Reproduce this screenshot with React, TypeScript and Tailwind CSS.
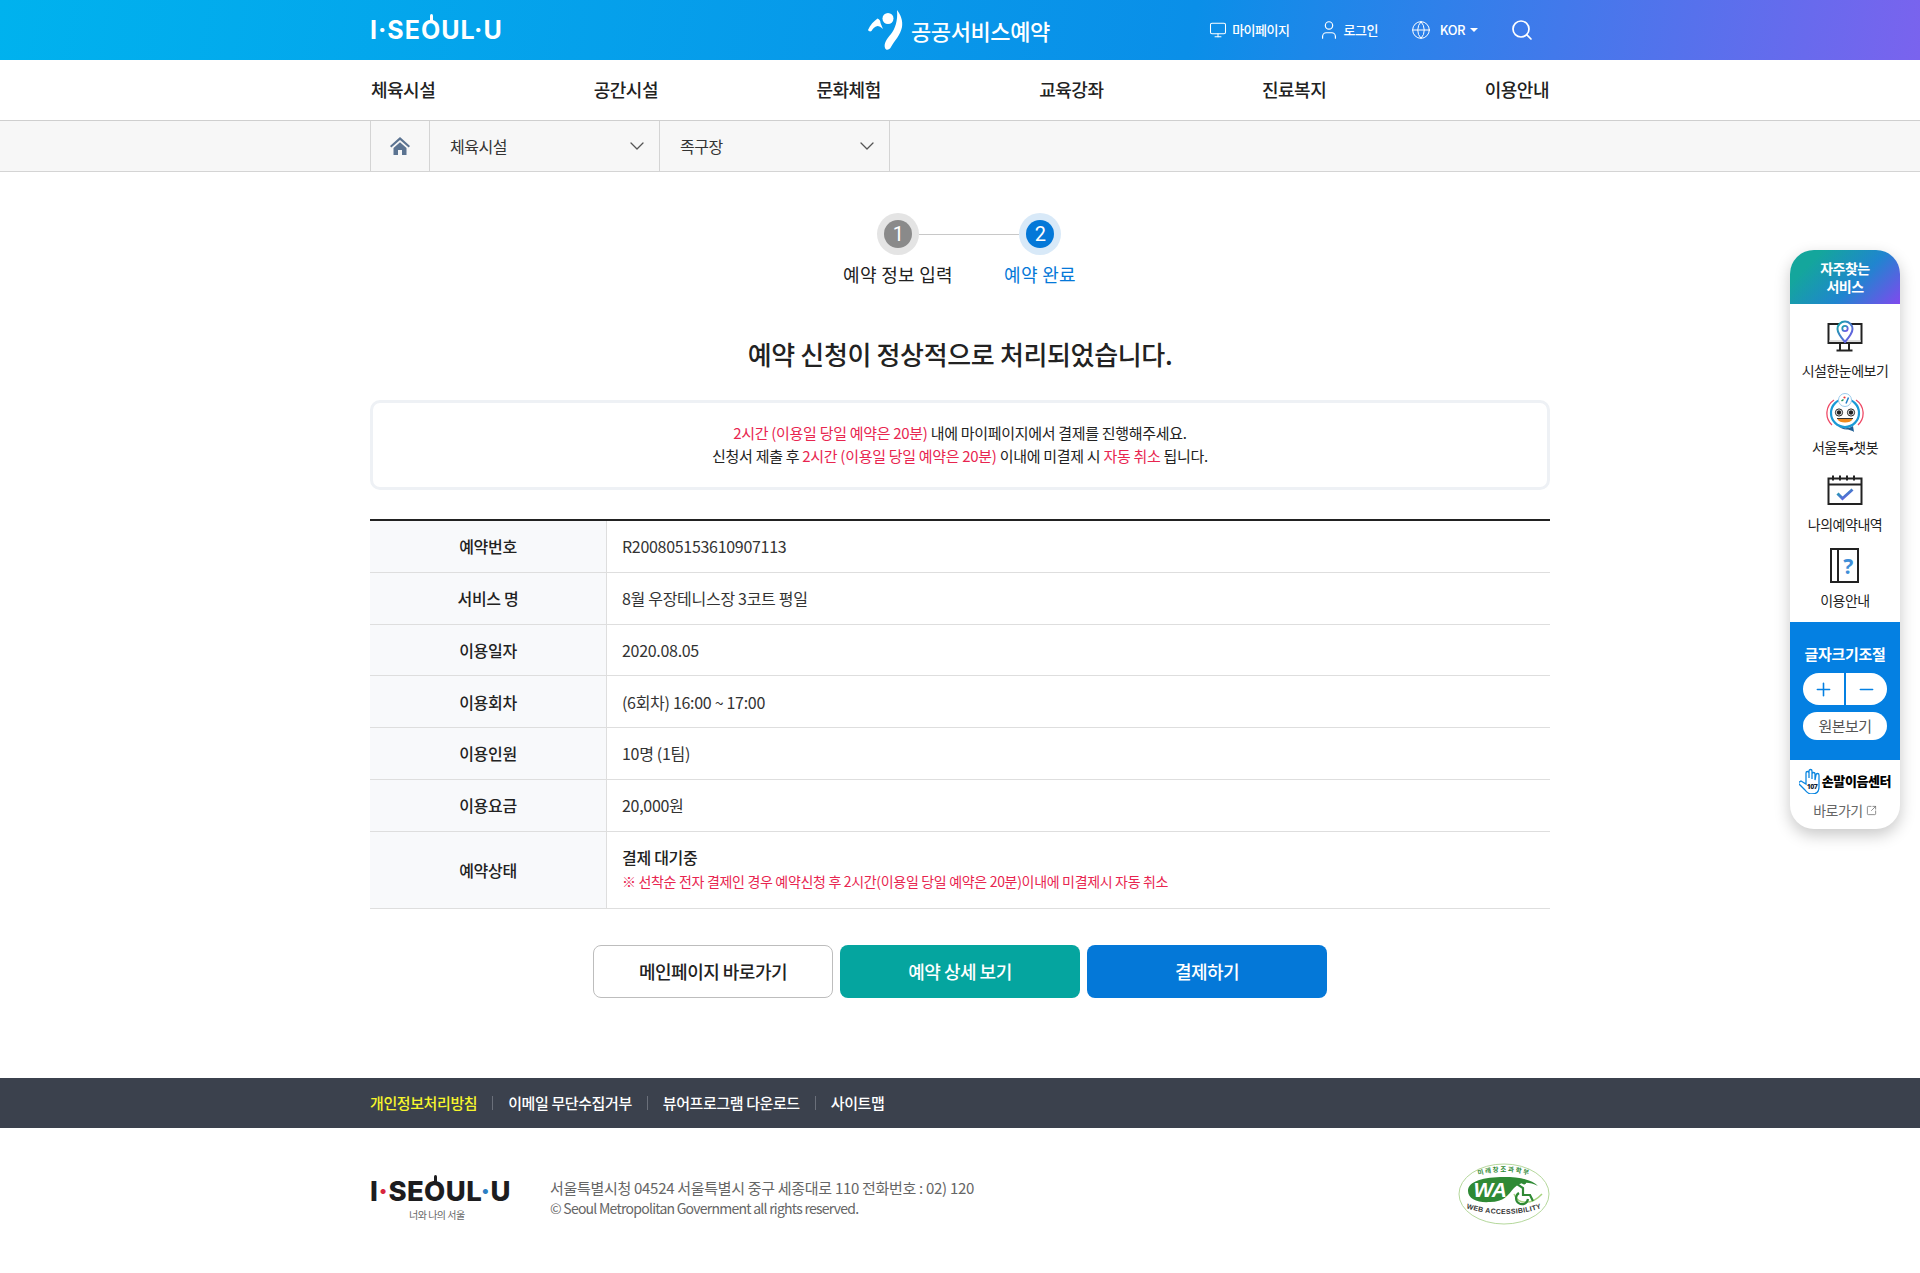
import { ChevronDown, Globe, Minus, Monitor, Plus, Search, SquareArrowOutUpRight, User } from "lucide-react";

const menus = ["체육시설", "공간시설", "문화체험", "교육강좌", "진료복지", "이용안내"];

const rows = [
  { label: "예약번호", value: "R200805153610907113" },
  { label: "서비스 명", value: "8월 우장테니스장 3코트 평일" },
  { label: "이용일자", value: "2020.08.05" },
  { label: "이용회차", value: "(6회차) 16:00 ~ 17:00" },
  { label: "이용인원", value: "10명 (1팀)" },
  { label: "이용요금", value: "20,000원" },
];

const footerLinks = ["이메일 무단수집거부", "뷰어프로그램 다운로드", "사이트맵"];

function GradientDef({ id }: { id: string }) {
  return (
    <defs>
      <linearGradient id={id} x1="0" y1="0" x2="1" y2="1">
        <stop offset="0" stopColor="#12a8a8" />
        <stop offset="1" stopColor="#7a50ee" />
      </linearGradient>
    </defs>
  );
}

function MonitorPinIcon() {
  return (
    <svg width="36" height="33" viewBox="0 0 36 33" fill="none">
      <GradientDef id="pinGrad" />
      <path d="M1.5 4h33v19h-33z" stroke="#222" strokeWidth="2" />
      <path d="M2.5 20h31v2h-31z" fill="#ddd" />
      <path d="M13 23v7M22 23v7M9.5 30.500h16" stroke="#222" strokeWidth="2" />
      <path d="M18 22c-4-4.600-7.500-8.800-7.500-13a7.500 7.500 0 0 1 15 0c0 4.200-3.500 8.400-7.500 13z" fill="#fff" stroke="url(#pinGrad)" strokeWidth="2" />
      <circle cx="18" cy="8.500" r="2.700" stroke="url(#pinGrad)" strokeWidth="1.800" />
    </svg>
  );
}

function ChatbotIcon() {
  return (
    <svg width="38" height="40" viewBox="0 0 38 40" fill="none">
      <path d="M8 7a16 16 0 0 0-2 25" stroke="#ef4a66" strokeWidth="1.300" />
      <path d="M30 7a16 16 0 0 1 2 25" stroke="#ef4a66" strokeWidth="1.300" />
      <circle cx="19" cy="20" r="14" fill="#fff" stroke="#1b9ad6" strokeWidth="2.200" />
      <path d="M12 33c5 3 10 3 15 0l1 6c-2-1.500-4-2-6-2.500-4 .5-7-1-10-3.500z" fill="#1f5f96" />
      <circle cx="19" cy="7" r="6.500" fill="#fff" stroke="#8fc4e8" strokeWidth="0.900" />
      <path d="M15.500 8l2-1.500" stroke="#1a8f5a" strokeWidth="1.500" />
      <path d="M20 10.500l2.500-6" stroke="#1f7fc8" strokeWidth="1.500" />
      <circle cx="18.500" cy="4.500" r="1.100" fill="#e33" />
      <circle cx="13" cy="19.500" r="3.600" fill="#fff" stroke="#222" />
      <circle cx="13" cy="19.500" r="2.200" fill="#222" />
      <circle cx="25" cy="19.500" r="3.600" fill="#fff" stroke="#222" />
      <circle cx="25" cy="19.500" r="2.200" fill="#222" />
      <path d="M11 25.500h16c-1.500 3-4.500 4-8 4s-6.500-1-8-4z" fill="#f08a1d" />
      <path d="M11 25.500h16" stroke="#333" strokeWidth="1" />
    </svg>
  );
}

function CalendarCheckIcon() {
  return (
    <svg width="36" height="32" viewBox="0 0 36 32" fill="none">
      <GradientDef id="calGrad" />
      <path d="M1.500 4.500h33v25.500h-33zM1.500 10.500h33" stroke="#222" strokeWidth="2" />
      <path d="M6 1.500v5M13 1.500v5M20 1.500v5M27 1.500v5" stroke="#222" strokeWidth="2" />
      <path d="M10.500 19.500l5 5 10-9" stroke="url(#calGrad)" strokeWidth="3" />
    </svg>
  );
}

function BookHelpIcon() {
  return (
    <svg width="30" height="36" viewBox="0 0 30 36" fill="none">
      <path d="M1 1h27v33H1zM8 1v33" stroke="#222" strokeWidth="2" />
      <text x="18" y="26" textAnchor="middle" fontSize="21" fontWeight="700" fontFamily="'Noto Sans', sans-serif" fill="#3f8fd8">?</text>
    </svg>
  );
}

function HandIcon() {
  return (
    <svg width="22" height="26" viewBox="0 0 22 26" fill="none">
      <path d="M2 13l5 3V5a1.500 1.500 0 0 1 3 0v5-7a1.500 1.500 0 0 1 3 0v8-5a1.500 1.500 0 0 1 3 0v6l1-5a1.500 1.500 0 0 1 3 0v12c0 5-3 7-7 7-3 0-5-1-7-4l-7-7z" fill="#fff" stroke="#0b86e0" strokeWidth="1.300" />
      <text x="13" y="21" textAnchor="middle" fontSize="7" fontWeight="800" fontFamily="'Noto Sans', sans-serif" fill="#123">107</text>
    </svg>
  );
}

function SymbolMark() {
  return (
    <svg width="38" height="42" viewBox="0 0 38 42" fill="#fff">
      <path d="M0 21C2 16 6 12 9.500 9.500c2 .5 3 2.500 3 4.500l2.500 6c-2-2-4-3-5.500-3-3 .5-5 3-6 5-1.500 1-3 0-3.500-1z" />
      <circle cx="20" cy="9.500" r="5.500" />
      <path d="M29 1c4 5 6 11 5 17-1.500 8-7 13-11 20-1.500 3-5 4-6 1-1.500-5 2-9 6-14 4-5 7-13 6-24z" />
    </svg>
  );
}

function WaMark() {
  return (
    <svg width="92" height="62" viewBox="0 0 92 62" fill="none">
      <defs>
        <path id="waTop" d="M18 13Q46 4 74 13" />
        <path id="waBottom" d="M8 45Q46 57 84 45" />
      </defs>
      <ellipse cx="46" cy="31" rx="45" ry="30" fill="#fff" stroke="#b5d89c" strokeWidth="1" />
      <path d="M10 28C10 18 26 14 46 14c14 0 28 2 34 9-10-5-18-4-24 2-6 7-10 14-24 14-12 1-22-3-22-11z" fill="#2f8a35" />
      <path d="M56 31c4 11 18 11 28 0" stroke="#a6d47e" strokeWidth="1.500" />
      <text x="32" y="34" textAnchor="middle" fontSize="21" fontWeight="700" fontStyle="italic" fontFamily="'Liberation Sans', sans-serif" fill="#fff">WA</text>
      <circle cx="66" cy="19" r="2.400" fill="#2f8a35" />
      <path d="M56 19l9 6v7h7l3 6M61 30a6 6 0 1 0 9 6" stroke="#2f8a35" strokeWidth="2.200" />
      <text fontSize="6.500" fontWeight="700" fontFamily="'Noto Sans CJK KR', sans-serif" fill="#2f8a35" letterSpacing="1.500">
        <textPath href="#waTop" startOffset="50%" textAnchor="middle">미래창조과학부</textPath>
      </text>
      <text fontSize="7" fontWeight="700" fontFamily="'Liberation Sans', sans-serif" fill="#333" letterSpacing="0.300">
        <textPath href="#waBottom" startOffset="50%" textAnchor="middle">WEB ACCESSIBILITY</textPath>
      </text>
    </svg>
  );
}

function SideMenu() {
  const items = [
    { icon: <MonitorPinIcon />, label: "시설한눈에보기" },
    { icon: <ChatbotIcon />, label: "서울톡•챗봇" },
    { icon: <CalendarCheckIcon />, label: "나의예약내역" },
    { icon: <BookHelpIcon />, label: "이용안내" },
  ];
  return (
    <aside className="absolute top-[250px] right-[20px] w-[110px] h-[579px] rounded-[24px] bg-white overflow-hidden flex flex-col shadow-[0_6px_16px_rgba(0,0,0,0.22)]">
      <div className="h-[54px] flex items-center justify-center text-center text-[14px] leading-[18px] font-bold text-white tracking-[-0.5px] bg-[linear-gradient(135deg,#14a69c_20%,#2085cf_60%,#8049ee_100%)]">
        자주찾는
        <br />
        서비스
      </div>
      <div className="h-[318px] flex flex-col pt-[11px]">
        {items.map((item) => (
          <div key={item.label} className="h-[77px] flex flex-col items-center">
            <div className="h-[42px] flex items-center justify-center">{item.icon}</div>
            <span className="mt-[4px] text-[14px] leading-[18px] text-[#222] tracking-[-0.5px]">{item.label}</span>
          </div>
        ))}
      </div>
      <div className="h-[138px] bg-[#0480e2] flex flex-col items-center pt-[22px]">
        <span className="text-[15px] leading-[20px] font-bold text-white tracking-[-0.3px]">글자크기조절</span>
        <div className="mt-[9px] w-[84px] h-[32px] flex gap-[2px]">
          <button className="flex-1 rounded-l-full bg-white flex items-center justify-center text-[#0480e2]">
            <Plus size={21} strokeWidth={1.8} />
          </button>
          <button className="flex-1 rounded-r-full bg-white flex items-center justify-center text-[#0480e2]">
            <Minus size={21} strokeWidth={1.8} />
          </button>
        </div>
        <button className="mt-[7px] w-[84px] h-[28px] rounded-full bg-white text-[15px] text-[#555] tracking-[-0.5px]">원본보기</button>
      </div>
      <div className="flex-1 flex flex-col items-center pt-[8px]">
        <div className="flex items-center gap-[1px]">
          <HandIcon />
          <span className="text-[13px] leading-[24px] font-black text-black tracking-[-0.4px]">손말이음센터</span>
        </div>
        <div className="mt-[7px] flex items-center gap-[3px] text-[14px] leading-[18px] text-[#666] tracking-[-0.5px]">
          바로가기
          <SquareArrowOutUpRight size={11} strokeWidth={1.6} />
        </div>
      </div>
    </aside>
  );
}

export default function App() {
  return (
    <div className="relative min-h-[1273px] bg-white overflow-hidden font-['Noto_Sans_CJK_KR','Noto_Sans',sans-serif] text-[#222] tracking-[-0.5px]">
      {/* Top bar */}
      <header className="h-[60px] bg-[linear-gradient(100deg,#00b2ee_0%,#0a8fe8_62%,#7a63ee_100%)] text-white">
        <div className="relative w-[1180px] h-full mx-auto flex items-center">
          <span className="relative font-['Inter',sans-serif] text-[25px] font-bold tracking-[1px] leading-none">
            I·SE
            <span className="relative">
              O
              <span className="absolute left-[9px] top-[-1px] w-[3px] h-[8px] bg-white rounded-full" />
            </span>
            UL·U
          </span>
          <div className="absolute left-[498px] top-[9px] flex items-center gap-[5px]">
            <SymbolMark />
            <span className="text-[22px] leading-[30px] font-medium tracking-[-0.4px]">공공서비스예약</span>
          </div>
          <div className="ml-auto mr-[16px] flex items-center text-[13px] font-medium">
            <span className="flex items-center gap-[5px]">
              <Monitor size={18} strokeWidth={1.4} />
              마이페이지
            </span>
            <span className="ml-[29px] flex items-center gap-[3px]">
              <User size={22} strokeWidth={1.3} />
              로그인
            </span>
            <span className="ml-[33px] flex items-center gap-[9px]">
              <Globe size={20} strokeWidth={1.2} />
              KOR
              <span className="ml-[-4px] w-0 h-0 border-x-[4.5px] border-x-transparent border-t-[4px] border-t-white" />
            </span>
            <Search className="ml-[32px]" size={24} strokeWidth={1.7} />
          </div>
        </div>
      </header>

      {/* Main menu */}
      <nav className="h-[61px] border-b border-[#cfcfcf]">
        <ul className="w-[1180px] h-full mx-auto flex items-center justify-between px-px pb-[2px]">
          {menus.map((menu) => (
            <li key={menu} className="text-[18px] font-medium leading-[24px]">
              {menu}
            </li>
          ))}
        </ul>
      </nav>

      {/* Breadcrumb */}
      <div className="h-[51px] bg-[#f7f7f7] border-b border-[#d4d4d4]">
        <div className="w-[1180px] h-full mx-auto flex text-[16px] text-[#333]">
          <div className="w-[60px] flex items-center justify-center border-x border-[#d4d4d4]">
            <svg width="20" height="18" viewBox="0 0 20 18" fill="#5b7391">
              <path d="M10 0L0 9l1.300 1.500L10 3l8.700 7.500L20 9z" />
              <path d="M3.500 11L10 5.300l6.500 5.700V18h-4.500v-5H8v5H3.500z" />
            </svg>
          </div>
          <div className="w-[230px] flex items-center justify-between pl-[20px] pr-[10px] border-r border-[#d4d4d4]">
            체육시설
            <ChevronDown size={24} strokeWidth={1.3} className="text-[#555]" />
          </div>
          <div className="w-[230px] flex items-center justify-between pl-[20px] pr-[10px] border-r border-[#d4d4d4]">
            족구장
            <ChevronDown size={24} strokeWidth={1.3} className="text-[#555]" />
          </div>
        </div>
      </div>

      <main className="w-[1180px] mx-auto">
        {/* Steps */}
        <div className="pl-[18px]">
          <div className="pt-[41px] flex items-center justify-center">
            <div className="w-[42px] h-[42px] rounded-full bg-[#e4e4e4] flex items-center justify-center">
              <span className="w-[28px] h-[28px] rounded-full bg-[#8a8a8a] text-white text-[20px] font-['Roboto',sans-serif] flex items-center justify-center">1</span>
            </div>
            <span className="w-[100px] h-px bg-[#c8c8c8]" />
            <div className="w-[42px] h-[42px] rounded-full bg-[#d8e9f8] flex items-center justify-center">
              <span className="w-[28px] h-[28px] rounded-full bg-[#0478d8] text-white text-[20px] font-['Roboto',sans-serif] flex items-center justify-center">2</span>
            </div>
          </div>
          <div className="mt-[7px] flex justify-center text-[18px] leading-[24px] text-center tracking-[0.3px]">
            <span className="w-[142px]">예약 정보 입력</span>
            <span className="w-[142px] text-[#0478d8]">예약 완료</span>
          </div>
        </div>

        <h1 className="mt-[50px] text-center text-[26px] leading-[36px] font-medium tracking-[-0.35px]">예약 신청이 정상적으로 처리되었습니다.</h1>

        {/* Notice */}
        <div className="mt-[28px] h-[90px] pb-[2px] border-[3px] border-[#eef1f5] rounded-[10px] flex flex-col items-center justify-center text-[15px] leading-[23px] tracking-[-0.3px]">
          <p>
            <span className="text-[#e8254f]">2시간 (이용일 당일 예약은 20분)</span> 내에 마이페이지에서 결제를 진행해주세요.
          </p>
          <p>
            신청서 제출 후 <span className="text-[#e8254f]">2시간 (이용일 당일 예약은 20분)</span> 이내에 미결제 시 <span className="text-[#e8254f]">자동 취소</span> 됩니다.
          </p>
        </div>

        {/* Detail table */}
        <div className="mt-[29px] border-t-2 border-[#222] text-[16px] tracking-[-0.3px]">
          {rows.map((row) => (
            <div key={row.label} className="flex h-[51.75px] border-b border-[#dedede]">
              <div className="w-[237px] bg-[#f8f9fb] border-r border-[#dedede] flex items-center justify-center font-medium">{row.label}</div>
              <div className="flex-1 pl-[15px] flex items-center text-[#333]">{row.value}</div>
            </div>
          ))}
          <div className="flex h-[77.5px] border-b border-[#dedede]">
            <div className="w-[237px] bg-[#f8f9fb] border-r border-[#dedede] flex items-center justify-center font-medium">예약상태</div>
            <div className="flex-1 pl-[15px] pb-[1px] flex flex-col justify-center">
              <p className="font-medium leading-[24px]">결제 대기중</p>
              <p className="text-[14px] leading-[25px] text-[#e8254f] tracking-[-0.32px]">※ 선착순 전자 결제인 경우 예약신청 후 2시간(이용일 당일 예약은 20분)이내에 미결제시 자동 취소</p>
            </div>
          </div>
        </div>

        {/* Buttons */}
        <div className="mt-[36px] flex justify-center gap-[7px] text-[18px] font-medium">
          <button className="w-[240px] h-[53px] rounded-[8px] border border-[#bdbdbd] bg-white">메인페이지 바로가기</button>
          <button className="w-[240px] h-[53px] rounded-[8px] bg-[#05a59f] text-white">예약 상세 보기</button>
          <button className="w-[240px] h-[53px] rounded-[8px] bg-[#0478d8] text-white">결제하기</button>
        </div>
      </main>

      {/* Footer */}
      <footer className="mt-[80px]">
        <div className="h-[50px] bg-[#3b414d]">
          <ul className="w-[1180px] h-full mx-auto flex items-center text-[15px] font-medium text-white tracking-[-0.4px]">
            <li className="text-[#f6f52c]">개인정보처리방침</li>
            {footerLinks.map((link) => (
              <li key={link} className="flex items-center">
                <span className="mx-[15px] w-px h-[14px] bg-[#6a6f7a]" />
                {link}
              </li>
            ))}
          </ul>
        </div>
        <div className="w-[1180px] mx-auto pt-[35px] flex items-start">
          <div className="w-[180px] pt-[11px] flex flex-col items-start">
            <span className="font-['Inter',sans-serif] text-[27.5px] leading-[34px] font-extrabold text-[#1d1d1f] tracking-[0.4px]">
              I<span className="text-[#d7263d]">·</span>SE
              <span className="relative">
                O
                <span className="absolute left-[10px] top-[1px] w-[3px] h-[8px] bg-[#1d1d1f] rounded-full" />
              </span>
              UL<span className="text-[#2c7fc4]">·</span>U
            </span>
            <span className="ml-[39px] text-[10px] leading-[14px] text-[#666]">너와 나의 서울</span>
          </div>
          <div className="pt-[15px] text-[15px] leading-[20px] text-[#666] tracking-[-0.3px]">
            <p>서울특별시청 04524 서울특별시 중구 세종대로 110 전화번호 : 02) 120</p>
            <p className="text-[14px] tracking-[-0.75px]">© Seoul Metropolitan Government all rights reserved.</p>
          </div>
          <div className="ml-auto">
            <WaMark />
          </div>
        </div>
      </footer>

      <SideMenu />
    </div>
  );
}
